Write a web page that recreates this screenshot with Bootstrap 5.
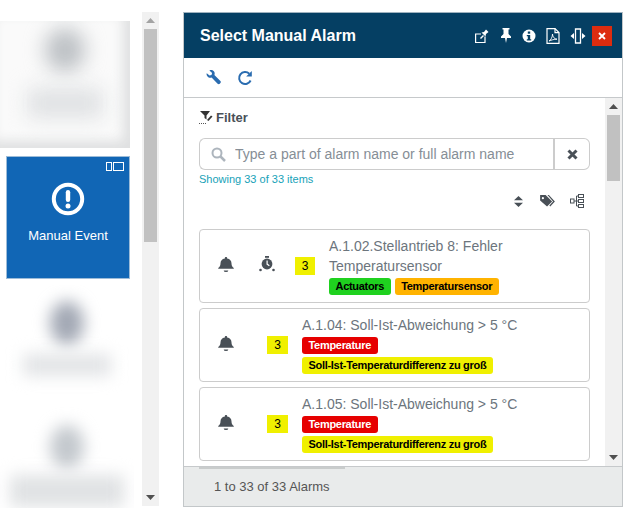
<!DOCTYPE html>
<html lang="en">
<head>
    <meta charset="UTF-8">
    <meta name="viewport" content="width=device-width, initial-scale=1.0">
    <link href="https://cdn.jsdelivr.net/npm/bootstrap@5.3.0/dist/css/bootstrap.min.css" rel="stylesheet">
    <title>Select Manual Alarm</title>
    <style>
        html, body { height: 508px; overflow: hidden; }
        body { font-family: "Liberation Sans", Arial, sans-serif; background: #fff; color: #495057; }
        .page-wrap { height: 508px; }

        /* tile column */
        .tile-col { width: 142px; flex: none; padding-top: 21px; overflow: hidden; }
        .tile-blur { width: 130px; height: 127px; padding-top: 7px; background: #fafafa; box-shadow: inset -7px -7px 12px #dfe0e1; overflow: hidden; }
        .tile-plain { background: #fff; box-shadow: none; height: 115px; width: 134px; padding-top: 16px; }
        .tile-last { height: 120px; padding-top: 25px; }
        .blur-head { width: 40px; height: 44px; border-radius: 50%; background: #bcc0c4; filter: blur(10px); }
        .blur-label { width: 76px; height: 30px; background: #e0e2e4; filter: blur(10px); margin-top: 16px; }
        .tile-plain .blur-head { width: 34px; background: #a2a8b4; filter: blur(8px); }
        .tile-plain .blur-label { width: 88px; height: 22px; margin-top: 9px; background: #e2e4e6; filter: blur(8px); }
        .tile-last .blur-head { background: #c3c8cd; }
        .tile-last .blur-label { width: 114px; height: 32px; background: #e0e2e4; margin-top: 6px; }
        .tile-active { width: 124px; height: 123px; margin: 8px 0 6px 6px; padding-top: 25px; background: #1166b5; border: 1px solid #9dbcd8; color: #fff; font-size: 13px; position: relative; }
        .tile-active .tile-name { margin-top: 10px; }
        .tile-corner { position: absolute; top: 5px; right: 5px; }

        /* scrollbars */
        .scroll-outer { width: 17px; flex: none; background: #f1f1f1; margin: 12px 0 2px; }
        .scroll-arrow { height: 17px; flex: none; }
        .thumb-outer { height: 213px; background: #c1c1c1; margin: 0 2px; }
        .thumb-inner { height: 66px; background: #c1c1c1; margin: 0 2px; }

        /* dialog */
        .dlg { width: 440px; margin: 12px 0 1px 24px; border: 1px solid #c3c7c9; border-top-color: #9fb2bf; flex: none; }
        .dlg-head { height: 45px; background: #053f63; color: #fff; padding: 0 10px 0 16px; }
        .dlg-title { font-size: 16px; font-weight: 700; }
        .dlg-icons { gap: 10px; }
        .dlg-close { width: 20px; height: 20px; margin-left: -4px; background: #dd2c0f; color: #fff; }
        .dlg-tools { height: 40px; padding: 0 22px; border-bottom: 1px solid #c6c9cb; gap: 16px; }
        .dlg-body { flex: 1; min-height: 0; }
        .dlg-scroll { flex: 1; min-width: 0; padding: 0 15px; overflow: hidden; }
        .filter-row { height: 40px; padding-bottom: 1px; font-size: 13px; font-weight: 700; color: #495057; gap: 2px; }
        .search-box { height: 32px; }
        .search-box .input-group-text { background: #fff; padding: 0 6px 0 11px; border-right: 0; border-color: #ccc; }
        .search-box .form-control { font-size: 14px; padding: 0 4px; border-left: 0; border-color: #ccc; box-shadow: none; }
        .search-box .form-control::placeholder { color: #868e96; opacity: 1; }
        .search-box .btn { width: 37px; padding: 0; background: #fff; border: 1px solid #ccc; border-left-width: 2px; }
        .item-count { font-size: 11px; color: #17a2b8; height: 15px; line-height: 19px; }
        .sort-row { height: 44px; padding: 11px 6px 0 0; }
        .sort-tag { margin-left: 17px; margin-top: -1px; }
        .sort-tree { margin-left: 15px; margin-top: -2px; }
        .alarm-card { border: 1px solid #ccc; border-radius: 4px; height: 74px; margin-bottom: 5px; padding-left: 16px; }
        .alarm-bell { width: 16px; margin: 0 2px 4px; flex: none; }
        .alarm-clock { width: 20px; flex: none; margin-left: 21px; margin-bottom: 4px; }
        .count-box { width: 21px; height: 18px; background: #f0f000; color: #000; font-size: 12px; line-height: 18px; text-align: center; flex: none; }
        .count-box.one { margin-left: 31px; }
        .count-box.two { margin-left: 18px; width: 20px; }
        .alarm-name { font-size: 14px; line-height: 20px; color: #6c757d; margin-bottom: 2px; }
        .alarm-text { margin-left: 14px; min-width: 0; align-self: flex-start; padding-top: 6px; }
        .alarm-tags { gap: 3px 4px; }
        .alarm-tag { font-size: 11px; font-weight: 700; letter-spacing: -.3px; line-height: 17px; height: 17px; padding: 0 6.5px; border-radius: 3px; color: #000; white-space: nowrap; }
        .tag-green { background: #1fd11f; }
        .tag-orange { background: #ffb300; }
        .tag-red { background: #e60000; color: #fff; }
        .tag-yellow { background: #f0f000; }
        .dlg-foot { height: 40px; flex: none; background: #e9ebeb; border-top: 1px solid #c6c9cb; font-size: 13px; color: #555; padding-left: 30px; position: relative; }
        .foot-shadow { position: absolute; top: 0; left: 15px; width: 146px; height: 2px; background: #c9cccc; }
    </style>
</head>
<body>

<div class="page-wrap d-flex">

    <!-- tiles on the left, the other ones are blurred in the source -->
    <div class="tile-col">
        <div class="tile-blur d-flex flex-column align-items-center">
            <div class="blur-head"></div>
            <div class="blur-label"></div>
        </div>
        <div class="tile-active d-flex flex-column align-items-center">
            <svg class="tile-corner" width="18" height="10" viewBox="0 0 18 10" fill="none" stroke="#fff"><rect x=".5" y=".5" width="5" height="8"/><rect x="7.500" y=".5" width="10" height="8"/></svg>
            <svg width="34" height="34" viewBox="0 0 34 34"><circle cx="17" cy="17" r="14.200" fill="none" stroke="#fff" stroke-width="4"/><rect x="14.800" y="8" width="4.400" height="12" rx="2.200" fill="#fff"/><circle cx="17" cy="24" r="2.500" fill="#fff"/></svg>
            <div class="tile-name">Manual Event</div>
        </div>
        <div class="tile-blur tile-plain d-flex flex-column align-items-center">
            <div class="blur-head"></div>
            <div class="blur-label"></div>
        </div>
        <div class="tile-blur tile-plain tile-last d-flex flex-column align-items-center">
            <div class="blur-head"></div>
            <div class="blur-label"></div>
        </div>
    </div>

    <div class="scroll-outer d-flex flex-column">
        <div class="scroll-arrow d-flex align-items-center justify-content-center"><svg width="9" height="5" viewBox="0 0 9 5"><path d="M4.500 0 9 5H0z" fill="#a3a3a3"/></svg></div>
        <div class="thumb-outer"></div>
        <div class="flex-grow-1"></div>
        <div class="scroll-arrow d-flex align-items-center justify-content-center"><svg width="9" height="5" viewBox="0 0 9 5"><path d="M0 0h9L4.500 5z" fill="#505050"/></svg></div>
    </div>

    <!-- dialog -->
    <div class="dlg d-flex flex-column">
        <div class="dlg-head d-flex align-items-center">
            <div class="dlg-title flex-grow-1">Select Manual Alarm</div>
            <div class="dlg-icons d-flex align-items-center">
                <svg width="16" height="16" viewBox="0 0 16 16" fill="none" stroke="#fff" stroke-width="1.200"><path d="M11 8.500v6H1.600V6H7"/><path d="M6.500 10.500l3-3" stroke-width="1.400"/><path d="M7.500 4.500l4 4 .5-2.500 2.500-2L12 1.500l-2 2.500z" fill="#fff" stroke="none"/></svg>
                <svg width="12" height="15" viewBox="0 0 12 15" fill="#fff"><path d="M2.500 0h7v1.500H8.500v4.500l2.500 2.500v1.500H7L6 15 5 10H1V8.500L3.500 6V1.500h-1z"/></svg>
                <svg width="14" height="14" viewBox="0 0 14 14"><circle cx="7" cy="7" r="6.500" fill="#fff"/><rect x="5.800" y="2.500" width="2.400" height="2.200" fill="#053f63"/><path d="M4.800 6h3.400v4.200h1v1.300H4.800v-1.300h1V7.300h-1z" fill="#053f63"/></svg>
                <svg width="14" height="16" viewBox="0 0 14 16" fill="none" stroke="#fff" stroke-width="1.200"><path d="M1 .6h8l4 4v10.800H1z"/><path d="M9 .6v4h4"/><path d="M3 13c2-1 3.500-4 3.500-7 0 3 2 5 4.500 5.200-3 0-5.500.8-8 1.800z" stroke-width=".9"/></svg>
                <svg width="16" height="16" viewBox="0 0 16 16" fill="#fff"><path d="M5.500 1h5v14h-5z" fill="none" stroke="#fff" stroke-width="1.300"/><path d="M4 5v6L.5 8zM12 5v6l3.500-3z"/></svg>
                <div class="dlg-close d-flex align-items-center justify-content-center">
                    <svg width="8" height="8" viewBox="0 0 8 8" stroke="#fff" stroke-width="1.800"><path d="M1 1l6 6M7 1 1 7"/></svg>
                </div>
            </div>
        </div>

        <div class="dlg-tools d-flex align-items-center">
            <svg width="15" height="15" viewBox="0 0 15 15" fill="#2a6cb0"><path d="M.8 3.200 3.500 5.600l2-.6.600-2L3.400.5c1.700-.8 3.900-.3 4.800 1.300.6 1 .6 2.100.2 3.100l6 6c.6.600.6 1.500 0 2.200l-.6.600c-.6.600-1.600.6-2.200 0l-6-6.200C4.500 7.900 3.300 7.800 2.300 7.200.8 6.300.2 4.700.8 3.200z"/></svg>
            <svg width="16" height="16" viewBox="0 0 16 16" fill="none" stroke="#2a6cb0" stroke-width="2"><path d="M13.600 10.500A6 6 0 1 1 12.300 3.700"/><path d="M14.800 1v5.600H9.200z" fill="#2a6cb0" stroke="none"/></svg>
        </div>

        <div class="dlg-body d-flex">
            <div class="dlg-scroll">
                <div class="filter-row d-flex align-items-center">
                    <svg width="15" height="15" viewBox="0 0 15 15"><path d="M1 1h10L7.500 5.500v4L5.500 8V5.500z" fill="#333"/><path d="M8 10l4-4.500 1.500 1L9.500 11z" fill="#333"/><path d="M0 13.500h7" stroke="#555" stroke-dasharray="1 1"/></svg>
                    <span>Filter</span>
                </div>
                <div class="input-group search-box">
                    <span class="input-group-text">
                        <svg width="15" height="15" viewBox="0 0 15 15" fill="none" stroke="#adb5bd" stroke-width="2"><circle cx="6" cy="6" r="4.500"/><path d="M9.500 9.500 14 14" stroke-width="2.500"/></svg>
                    </span>
                    <input class="form-control" type="text" placeholder="Type a part of alarm name or full alarm name">
                    <button class="btn" type="button">
                        <svg width="11" height="11" viewBox="0 0 11 11" stroke="#495057" stroke-width="3"><path d="M1.500 1.500l8 8M9.500 1.500l-8 8"/></svg>
                    </button>
                </div>
                <div class="item-count">Showing 33 of 33 items</div>
                <div class="sort-row d-flex justify-content-end align-items-start">
                    <svg width="9" height="11" viewBox="0 0 9 11" fill="#495057"><path d="M4.500 0 9 4.300H0zM4.500 11 0 6.700h9z"/></svg>
                    <svg class="sort-tag" width="15" height="12" viewBox="0 0 16 13" fill="#495057"><path d="M0 0h6l7 7-5.500 5.500L0 6zM3 2.200a1.200 1.200 0 1 0 0 2.400 1.200 1.200 0 0 0 0-2.400z" fill-rule="evenodd"/><path d="M8 0h1.500L16 7l-5 5.500-1-1L14 7z"/></svg>
                    <svg class="sort-tree" width="14" height="14" viewBox="0 0 14 14" fill="none" stroke="#495057"><rect x=".5" y="5" width="3.500" height="4"/><rect x="8.500" y=".5" width="5" height="3"/><rect x="8.500" y="5.500" width="5" height="3"/><rect x="8.500" y="10.500" width="5" height="3"/><path d="M4 7h2.500M6.500 2v10M6.500 2h2M6.500 7h2M6.500 12h2"/></svg>
                </div>

                <div class="card alarm-card d-flex flex-row align-items-center">
                    <svg class="alarm-bell" width="16" height="15" viewBox="1 0 14 16" preserveAspectRatio="none" fill="#495057"><path d="M8 0c.6 0 1 .4 1 1v.6c2.500.5 3.800 2.500 3.800 5 0 2.800.9 3.900 2 5.200v.7H1.200v-.7c1.100-1.300 2-2.400 2-5.200 0-2.500 1.300-4.500 3.800-5V1c0-.6.4-1 1-1z"/><path d="M6 14.300h4a2 1.600 0 0 1-4 0z"/></svg>
                    <svg class="alarm-clock" width="20" height="16" viewBox="0 0 16 16" fill="#495057"><circle cx="8" cy="8" r="5.400"/><rect x="6" y="0" width="4" height="1.800"/><path d="M7.500 4.500h1.200v3.300l2 1.500-.7.900-2.500-1.800z" fill="#fff"/><circle cx="1.500" cy="14" r="1.300"/><circle cx="14.500" cy="14" r="1.300"/></svg>
                    <div class="count-box two">3</div>
                    <div class="alarm-text">
                        <div class="alarm-name">A.1.02.Stellantrieb 8: Fehler Temperatursensor</div>
                        <div class="alarm-tags d-flex">
                            <span class="alarm-tag tag-green">Actuators</span>
                            <span class="alarm-tag tag-orange">Temperatursensor</span>
                        </div>
                    </div>
                </div>

                <div class="card alarm-card d-flex flex-row align-items-center">
                    <svg class="alarm-bell" width="16" height="15" viewBox="1 0 14 16" preserveAspectRatio="none" fill="#495057"><path d="M8 0c.6 0 1 .4 1 1v.6c2.500.5 3.800 2.500 3.800 5 0 2.800.9 3.900 2 5.200v.7H1.200v-.7c1.100-1.300 2-2.400 2-5.200 0-2.500 1.300-4.500 3.800-5V1c0-.6.4-1 1-1z"/><path d="M6 14.300h4a2 1.600 0 0 1-4 0z"/></svg>
                    <div class="count-box one">3</div>
                    <div class="alarm-text">
                        <div class="alarm-name">A.1.04: Soll-Ist-Abweichung &gt; 5 °C</div>
                        <div class="alarm-tags d-flex flex-column align-items-start">
                            <span class="alarm-tag tag-red">Temperature</span>
                            <span class="alarm-tag tag-yellow">Soll-Ist-Temperaturdifferenz zu groß</span>
                        </div>
                    </div>
                </div>

                <div class="card alarm-card d-flex flex-row align-items-center">
                    <svg class="alarm-bell" width="16" height="15" viewBox="1 0 14 16" preserveAspectRatio="none" fill="#495057"><path d="M8 0c.6 0 1 .4 1 1v.6c2.500.5 3.800 2.500 3.800 5 0 2.800.9 3.900 2 5.200v.7H1.200v-.7c1.100-1.300 2-2.400 2-5.200 0-2.500 1.300-4.500 3.800-5V1c0-.6.4-1 1-1z"/><path d="M6 14.300h4a2 1.600 0 0 1-4 0z"/></svg>
                    <div class="count-box one">3</div>
                    <div class="alarm-text">
                        <div class="alarm-name">A.1.05: Soll-Ist-Abweichung &gt; 5 °C</div>
                        <div class="alarm-tags d-flex flex-column align-items-start">
                            <span class="alarm-tag tag-red">Temperature</span>
                            <span class="alarm-tag tag-yellow">Soll-Ist-Temperaturdifferenz zu groß</span>
                        </div>
                    </div>
                </div>
            </div>
            <div class="scroll-outer m-0 d-flex flex-column">
                <div class="scroll-arrow d-flex align-items-center justify-content-center"><svg width="9" height="5" viewBox="0 0 9 5"><path d="M4.500 0 9 5H0z" fill="#505050"/></svg></div>
                <div class="thumb-inner"></div>
                <div class="flex-grow-1"></div>
                <div class="scroll-arrow d-flex align-items-center justify-content-center"><svg width="9" height="5" viewBox="0 0 9 5"><path d="M0 0h9L4.500 5z" fill="#505050"/></svg></div>
            </div>
        </div>

        <div class="dlg-foot d-flex align-items-center">
            <div class="foot-shadow"></div>
            1 to 33 of 33 Alarms
        </div>
    </div>
</div>

<script src="https://cdn.jsdelivr.net/npm/bootstrap@5.3.0/dist/js/bootstrap.bundle.min.js"></script>
</body>
</html>
